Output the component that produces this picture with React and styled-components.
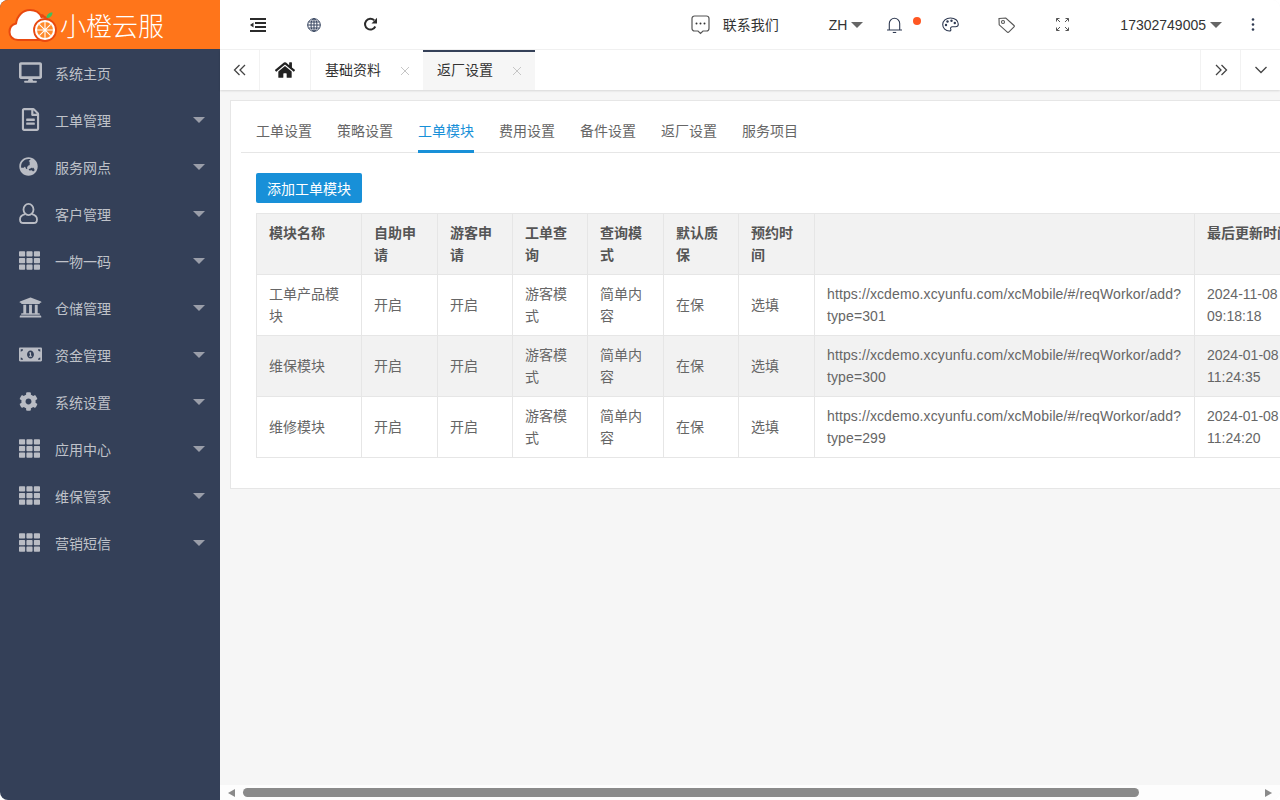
import React from 'react'
import styled, { createGlobalStyle } from 'styled-components'
import { FaDesktop, FaRegFileAlt, FaGlobeAsia, FaTh, FaUniversity, FaMoneyBillAlt, FaCog, FaHome } from 'react-icons/fa'

const menus = [
  { name: '系统主页', icon: <FaDesktop size={23} />, leaf: true },
  { name: '工单管理', icon: <FaRegFileAlt size={23} /> },
  { name: '服务网点', icon: <FaGlobeAsia size={19} /> },
  { name: '客户管理', icon: <UserIcon /> },
  { name: '一物一码', icon: <FaTh size={21} /> },
  { name: '仓储管理', icon: <FaUniversity size={23} /> },
  { name: '资金管理', icon: <FaMoneyBillAlt size={23} /> },
  { name: '系统设置', icon: <FaCog size={19} /> },
  { name: '应用中心', icon: <FaTh size={21} /> },
  { name: '维保管家', icon: <FaTh size={21} /> },
  { name: '营销短信', icon: <FaTh size={21} /> },
]

const subTabs = ['工单设置', '策略设置', '工单模块', '费用设置', '备件设置', '返厂设置', '服务项目']

const columns = [
  { title: '模块名称', width: 105 },
  { title: '自助申请', width: 76 },
  { title: '游客申请', width: 75 },
  { title: '工单查询', width: 75 },
  { title: '查询模式', width: 76 },
  { title: '默认质保', width: 75 },
  { title: '预约时间', width: 76 },
  { title: '', width: 380 },
  { title: '最后更新时间', width: 112, nowrap: true },
]

const rows = [
  { name: '工单产品模块', type: 301, date: '2024-11-08', time: '09:18:18' },
  { name: '维保模块', type: 300, date: '2024-01-08', time: '11:24:35' },
  { name: '维修模块', type: 299, date: '2024-01-08', time: '11:24:20' },
]

function UserIcon() {
  return (
    <svg width="19" height="21" viewBox="0 0 19 21" fill="none" stroke="currentColor" strokeWidth="1.8">
      <ellipse cx="9.5" cy="6.5" rx="5" ry="5.6" />
      <path d="M6 11.2C3 12 1 13.8 1 16.4c0 2.2 1.2 3.6 3.4 3.6h10.2c2.2 0 3.4-1.4 3.4-3.6 0-2.6-2-4.4-5-5.2" />
    </svg>
  )
}

const Logo = () => (
  <svg width="50" height="36" viewBox="0 0 50 36">
    <path d="M10 33C4.500 33 1.500 29 1.500 25c0-4 2.500-7.500 6.500-8.500C9 9 14.500 3 22 3c5.500 0 9.500 2.500 11.500 7 2-.5 4 0 5.500 1.500V33z" fill="#fff" stroke="#e8490f" strokeWidth="2" />
    <circle cx="37" cy="23" r="11" fill="#fff" stroke="#e8490f" strokeWidth="1.800" />
    <circle cx="37" cy="23" r="8" fill="#ff8a2a" />
    <path d="M37 15v16M29 23h16M31.300 17.300l11.400 11.400M42.700 17.300 31.300 28.700" stroke="#fff" strokeWidth="1.100" />
    <path d="M38.500 11c0-3.500 2.500-5.500 6-5.500 0 3.500-2.500 5.500-6 5.500z" fill="#3fbf5f" />
    <path d="M37.500 11c-.5-2.500-2-4-4.500-4 .2 2.500 2 4 4.500 4z" fill="#e8490f" />
  </svg>
)

const ShrinkIcon = () => (
  <svg width="16" height="14" viewBox="0 0 16 14" fill="#2b2b2b">
    <rect y="0" width="16" height="2" />
    <rect x="5" y="4" width="11" height="2" />
    <rect x="5" y="8" width="11" height="2" />
    <rect y="12" width="16" height="2" />
    <path d="M0 7l3.500-2.500v5z" />
  </svg>
)

const GlobeIcon = () => (
  <svg width="14" height="14" viewBox="0 0 14 14" fill="none" stroke="#33415c" strokeWidth="1">
    <circle cx="7" cy="7" r="6.300" />
    <ellipse cx="7" cy="7" rx="3" ry="6.300" />
    <path d="M7 .7v12.600M.7 7h12.600M1.600 4h10.800M1.600 10h10.800" />
  </svg>
)

const RefreshIcon = () => (
  <svg width="15" height="15" viewBox="0 0 15 15" fill="none">
    <path d="M12.300 9.500A5.400 5.400 0 1 1 11.200 3.300" stroke="#2b2b2b" strokeWidth="2" />
    <path d="M14 .8v5.600H8.500z" fill="#2b2b2b" />
  </svg>
)

const ChatIcon = () => (
  <svg width="19" height="20" viewBox="0 0 19 20" fill="none" stroke="#555" strokeWidth="1.200">
    <path d="M3.500 1h12A2.500 2.500 0 0 1 18 3.500v10a2.500 2.500 0 0 1-2.500 2.500h-3.500l-2.500 2.500L7 16H3.500A2.500 2.500 0 0 1 1 13.500v-10A2.500 2.500 0 0 1 3.500 1z" />
    <circle cx="5.500" cy="8.500" r="1" fill="#333" stroke="none" />
    <circle cx="9.500" cy="8.500" r="1" fill="#333" stroke="none" />
    <circle cx="13.500" cy="8.500" r="1" fill="#333" stroke="none" />
  </svg>
)

const BellIcon = () => (
  <svg width="15" height="16" viewBox="0 0 15 16" fill="none" stroke="#2f3a52" strokeWidth="1.100">
    <path d="M0 13h15M2.300 13V6.500a5.200 5.200 0 0 1 10.400 0V13" />
    <path d="M5.800 15.500h3.400" />
  </svg>
)

const PaletteIcon = () => (
  <svg width="17" height="15" viewBox="0 0 17 15" fill="none" stroke="#2f3a52" strokeWidth="1.100">
    <path d="M8.500 1C4 1 .7 3.800.7 7.500c0 3.500 3 6.500 6.600 6.500 1.500 0 1.900-1 1.400-2-.5-1.200.2-2.200 1.600-2.200h3.200c1.800 0 2.800-1 2.800-2.500C16.300 3.600 13 1 8.500 1z" />
    <circle cx="4" cy="8" r="1.200" fill="#2f3a52" stroke="none" />
    <circle cx="5.500" cy="4.500" r="1.200" fill="#2f3a52" stroke="none" />
    <circle cx="9.500" cy="3.800" r="1.200" fill="#2f3a52" stroke="none" />
    <circle cx="12.800" cy="6" r="1.200" fill="#2f3a52" stroke="none" />
  </svg>
)

const TagIcon = () => (
  <svg width="17" height="16" viewBox="0 0 17 16" fill="none" stroke="#555" strokeWidth="1.100">
    <path d="M1 1.500 7.800 1l8.200 7.500a1 1 0 0 1 0 1.400l-5.300 5.200a1 1 0 0 1-1.400 0L1.200 7.800z" />
    <circle cx="5" cy="5" r="1.500" />
  </svg>
)

const FullIcon = () => (
  <svg width="13" height="13" viewBox="0 0 13 13" fill="none" stroke="#555" strokeWidth="1">
    <path d="M.5 3.500v-3h3M.7.700l3.300 3.300M9.500.5h3v3M12.300.7 9 4M.5 9.500v3h3M.7 12.300 4 9M12.500 9.500v3h-3M12.300 12.300 9 9" />
  </svg>
)

const MoreIcon = () => (
  <svg width="4" height="13" viewBox="0 0 4 13" fill="#2f3a52">
    <circle cx="2" cy="1.500" r="1.300" />
    <circle cx="2" cy="6.500" r="1.300" />
    <circle cx="2" cy="11.500" r="1.300" />
  </svg>
)

const CloseIcon = () => (
  <svg width="10" height="10" viewBox="0 0 10 10" stroke="#c6c6c6" strokeWidth="1">
    <path d="M1 1l8 8M9 1l-8 8" />
  </svg>
)

const Chevron = ({ d, size = 13 }) => (
  <svg width={size} height={size} viewBox="0 0 14 14" fill="none" stroke="#444" strokeWidth="1.300">
    <path d={d} />
  </svg>
)

export default function App() {
  return (
    <>
      <GlobalStyle />
      <Page>
        <Sidebar>
          <LogoBar>
            <Logo />
            <LogoText>小橙云服</LogoText>
          </LogoBar>
          {menus.map((m) => (
            <MenuItem key={m.name}>
              <MenuIcon>{m.icon}</MenuIcon>
              <MenuName>{m.name}</MenuName>
              {!m.leaf && <MenuCaret />}
            </MenuItem>
          ))}
        </Sidebar>
        <Main>
          <Header>
            <HeaderItem><ShrinkIcon /></HeaderItem>
            <HeaderItem><GlobeIcon /></HeaderItem>
            <HeaderItem><RefreshIcon /></HeaderItem>
            <Contact>
              <ChatIcon />
              <ContactText>联系我们</ContactText>
            </Contact>
            <Lang>ZH<Caret /></Lang>
            <HeaderItem>
              <BellIcon />
              <Dot />
            </HeaderItem>
            <HeaderItem><PaletteIcon /></HeaderItem>
            <HeaderItem><TagIcon /></HeaderItem>
            <HeaderItem><FullIcon /></HeaderItem>
            <UserName>17302749005<Caret /></UserName>
            <MoreItem><MoreIcon /></MoreItem>
          </Header>
          <TabBar>
            <TabButton $w={40}><Chevron d="M6.500 2 1.500 7l5 5M12 2 7 7l5 5" size={14} /></TabButton>
            <TabButton $w={51}><FaHome size={20} color="#222" /></TabButton>
            <PageTab>基础资料<Close><CloseIcon /></Close></PageTab>
            <PageTab $active>返厂设置<Close><CloseIcon /></Close></PageTab>
            <TabSpacer />
            <TabButton $w={40} $left><Chevron d="M2 2l5 5-5 5M7.500 2l5 5-5 5" size={14} /></TabButton>
            <TabButton $w={40} $left $noRight><Chevron d="M1.500 4 7 9.500 12.500 4" size={14} /></TabButton>
          </TabBar>
          <Content>
            <Panel>
              <SubTabs>
                {subTabs.map((t) => (
                  <SubTab key={t} $active={t === '工单模块'}>{t}</SubTab>
                ))}
              </SubTabs>
              <Body>
                <AddButton>添加工单模块</AddButton>
                <Table>
                  <thead>
                    <tr>
                      {columns.map((c, i) => <Th key={i} $w={c.width} $nowrap={c.nowrap}>{c.title}</Th>)}
                    </tr>
                  </thead>
                  <tbody>
                    {rows.map((r) => (
                      <Tr key={r.type}>
                        <Td>{r.name}</Td>
                        <Td>开启</Td>
                        <Td>开启</Td>
                        <Td>游客模式</Td>
                        <Td>简单内容</Td>
                        <Td>在保</Td>
                        <Td>选填</Td>
                        <UrlTd>https://xcdemo.xcyunfu.com/xcMobile/#/reqWorkor/add?type={r.type}</UrlTd>
                        <Td>{r.date} {r.time}</Td>
                      </Tr>
                    ))}
                  </tbody>
                </Table>
              </Body>
            </Panel>
          </Content>
          <ScrollBar>
            <ArrowLeft />
            <ScrollTrack><ScrollThumb /></ScrollTrack>
            <ArrowRight />
          </ScrollBar>
        </Main>
      </Page>
    </>
  )
}

const GlobalStyle = createGlobalStyle`
  html, body { margin: 0; padding: 0; background: #fff; }
  body {
    font-family: "Liberation Sans", "Noto Sans CJK SC", sans-serif;
    font-size: 14px;
    color: #666;
  }
  * { box-sizing: border-box; }
`

const Page = styled.div`
  display: flex;
  width: 1280px;
  height: 800px;
  overflow: hidden;
  border-radius: 8px;
`

// 왼쪽 메뉴
const Sidebar = styled.div`
  width: 220px;
  flex: none;
  background: #344058;
`
const LogoBar = styled.div`
  display: flex;
  align-items: center;
  gap: 2px;
  height: 49px;
  padding-left: 8px;
  background: #ff751a;
`
const LogoText = styled.div`
  font-size: 26px;
  font-weight: 300;
  color: #fff;
`
const MenuItem = styled.div`
  display: flex;
  align-items: center;
  height: 47px;
  padding: 0 15px 0 19px;
  color: #b9bcc4;
`
const MenuIcon = styled.div`
  display: flex;
  align-items: center;
  width: 36px;
  flex: none;
`
const MenuName = styled.div`
  font-size: 14px;
  color: #bfc2c9;
`
const MenuCaret = styled.div`
  margin-left: auto;
  width: 0;
  height: 0;
  border-left: 6px solid transparent;
  border-right: 6px solid transparent;
  border-top: 6px solid #9a9ea9;
`

const Main = styled.div`
  flex: 1;
  min-width: 0;
  display: flex;
  flex-direction: column;
  background: #f6f6f6;
`

// 상단
const Header = styled.div`
  display: flex;
  align-items: center;
  height: 50px;
  flex: none;
  padding: 0 9px 0 10px;
  background: #fff;
  border-bottom: 1px solid #f2f2f2;
  color: #333;
`
const HeaderItem = styled.div`
  position: relative;
  display: flex;
  align-items: center;
  justify-content: center;
  width: 56px;
  height: 100%;
`
const Contact = styled.div`
  display: flex;
  align-items: center;
  gap: 13px;
  margin-left: auto;
`
const ContactText = styled.span`
  padding-bottom: 2px;
`
const Lang = styled.div`
  display: flex;
  align-items: center;
  gap: 4px;
  margin: 0 3px 0 50px;
`
const Caret = styled.span`
  display: inline-block;
  width: 0;
  height: 0;
  border-left: 6px solid transparent;
  border-right: 6px solid transparent;
  border-top: 6px solid #666;
`
const Dot = styled.span`
  position: absolute;
  top: 17px;
  left: 47px;
  width: 8px;
  height: 8px;
  border-radius: 50%;
  background: #ff5722;
`
const UserName = styled.div`
  display: flex;
  align-items: center;
  gap: 4px;
  margin-left: 30px;
`
const MoreItem = styled.div`
  display: flex;
  justify-content: center;
  width: 36px;
  margin-left: 13px;
`

// 탭
const TabBar = styled.div`
  display: flex;
  height: 40px;
  flex: none;
  background: #fff;
  box-shadow: 0 1px 2px rgba(0, 0, 0, 0.12);
  position: relative;
`
const TabButton = styled.div`
  display: flex;
  align-items: center;
  justify-content: center;
  width: ${(p) => p.$w}px;
  flex: none;
  border-right: ${(p) => (p.$left || p.$noRight ? 'none' : '1px solid #f2f2f2')};
  border-left: ${(p) => (p.$left ? '1px solid #f2f2f2' : 'none')};
`
const PageTab = styled.div`
  display: flex;
  align-items: center;
  width: 112px;
  flex: none;
  padding: 0 0 4px 14px;
  color: #333;
  background: ${(p) => (p.$active ? '#f6f6f6' : '#fff')};
  border-top: 2px solid ${(p) => (p.$active ? '#344058' : 'transparent')};
`
const Close = styled.span`
  display: flex;
  margin: 3px 0 0 19px;
`
const TabSpacer = styled.div`
  flex: 1;
`

// 본문
const Content = styled.div`
  flex: 1;
  min-height: 0;
  overflow: hidden;
  padding: 10px;
`
const Panel = styled.div`
  width: 1196px;
  padding: 10px 10px 30px;
  background: #fff;
  border: 1px solid #e6e6e6;
`
const SubTabs = styled.div`
  display: flex;
  gap: 25px;
  height: 42px;
  padding-left: 15px;
  border-bottom: 1px solid #e6e6e6;
`
const SubTab = styled.div`
  height: 42px;
  line-height: 40px;
  color: ${(p) => (p.$active ? '#1890d8' : '#666')};
  border-bottom: 3px solid ${(p) => (p.$active ? '#1890d8' : 'transparent')};
`
const Body = styled.div`
  padding: 20px 0 0 15px;
`
const AddButton = styled.button`
  display: block;
  height: 30px;
  padding: 0 11px;
  border: none;
  border-radius: 2px;
  background: #1890d8;
  color: #fff;
  font-family: inherit;
  font-size: 14px;
`
const Table = styled.table`
  table-layout: fixed;
  width: 1050px;
  margin-top: 10px;
  border-collapse: collapse;
`
const Th = styled.th`
  width: ${(p) => p.$w}px;
  padding: 8px 12px;
  height: 61px;
  vertical-align: top;
  text-align: left;
  font-size: 14px;
  line-height: 22px;
  font-weight: 700;
  color: #555;
  background: #f2f2f2;
  border: 1px solid #e6e6e6;
  white-space: ${(p) => (p.$nowrap ? 'nowrap' : 'normal')};
`
const Tr = styled.tr`
  &:nth-child(2) { background: #f2f2f2; }
`
const Td = styled.td`
  padding: 8px 12px;
  height: 61px;
  font-size: 14px;
  line-height: 22px;
  color: #666;
  border: 1px solid #e6e6e6;
`
const UrlTd = styled(Td)`
  letter-spacing: 0.11px;
`

// 스크롤바
const ScrollBar = styled.div`
  display: flex;
  align-items: center;
  height: 15px;
  flex: none;
  background: #fdfdfd;
`
const ArrowLeft = styled.div`
  margin-left: 8px;
  width: 0;
  height: 0;
  border-top: 4px solid transparent;
  border-bottom: 4px solid transparent;
  border-right: 7px solid #8a8a8a;
`
const ArrowRight = styled.div`
  margin-right: 8px;
  width: 0;
  height: 0;
  border-top: 4px solid transparent;
  border-bottom: 4px solid transparent;
  border-left: 7px solid #8a8a8a;
`
const ScrollTrack = styled.div`
  flex: 1;
  padding-left: 8px;
`
const ScrollThumb = styled.div`
  width: 896px;
  height: 9px;
  border-radius: 5px;
  background: #8a8a8a;
`
